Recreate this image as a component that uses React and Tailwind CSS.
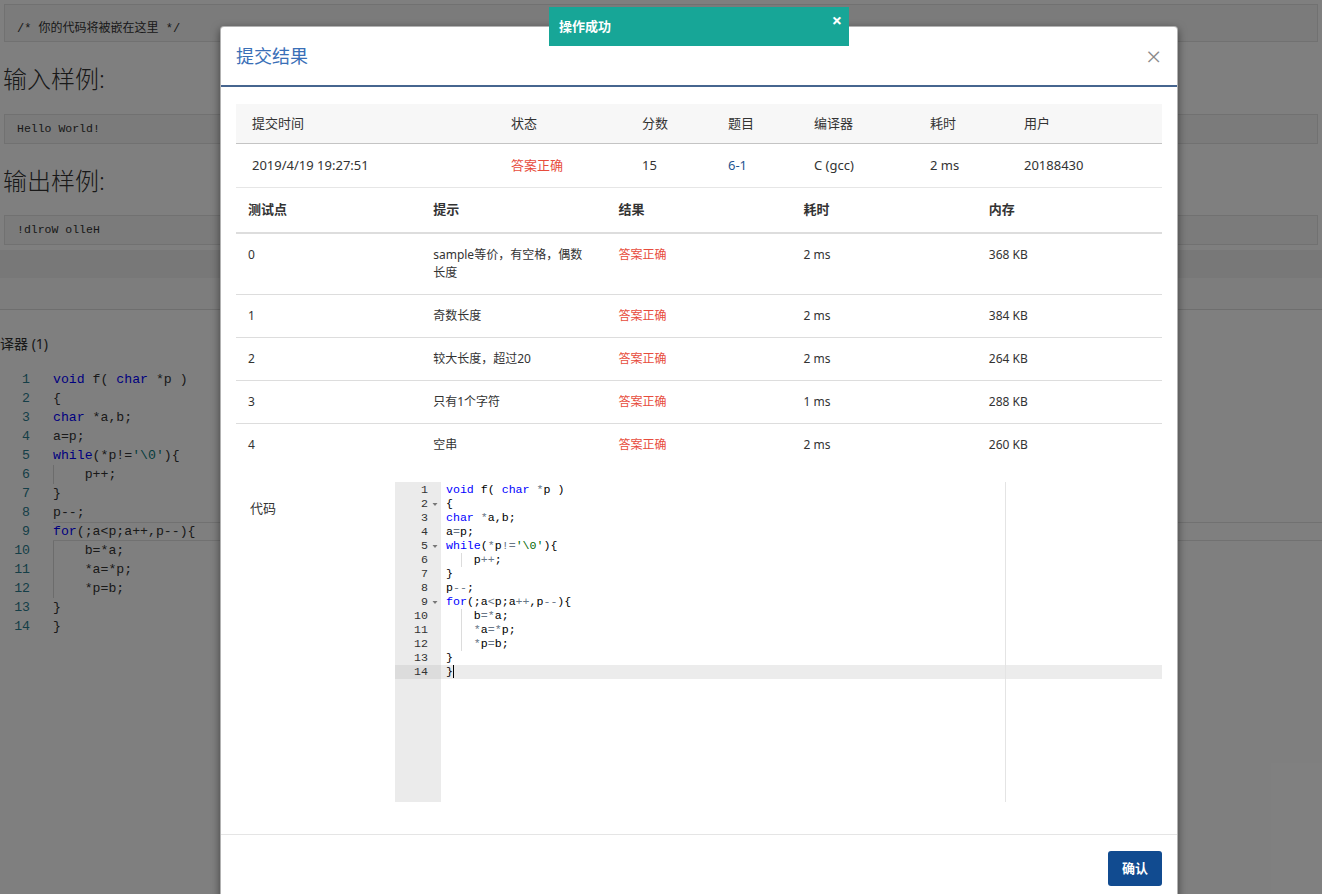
import React from "react";

const kw = "text-[#0000ff]";
const op = "text-[#687687]";
const str = "text-[#036a07]";

const code = [
  [["void", kw], [" f( ", ""], ["char", kw], [" ", ""], ["*", op], ["p )", ""]],
  [["{", ""]],
  [["char", kw], [" ", ""], ["*", op], ["a,b;", ""]],
  [["a", ""], ["=", op], ["p;", ""]],
  [["while", kw], ["(", ""], ["*", op], ["p", ""], ["!=", op], ["'\\0'", str], ["){", ""]],
  [["IND", ""], ["p", ""], ["++", op], [";", ""]],
  [["}", ""]],
  [["p", ""], ["--", op], [";", ""]],
  [["for", kw], ["(;a", ""], ["<", op], ["p;a", ""], ["++", op], [",p", ""], ["--", op], ["){", ""]],
  [["IND", ""], ["b", ""], ["=*", op], ["a;", ""]],
  [["IND", ""], ["*", op], ["a", ""], ["=*", op], ["p;", ""]],
  [["IND", ""], ["*", op], ["p", ""], ["=", op], ["b;", ""]],
  [["}", ""]],
  [["}", ""]],
];

const bgKw = "text-[#0000ff]";
const bgStr = "text-[#0a7a7a]";

function BgLine({ tokens }) {
  return tokens.map(([t, c], i) =>
    t === "IND" ? (
      <span key={i} className="inline-block h-[19px] w-[4ch] border-l border-[#d8d8d8] align-top" />
    ) : (
      <span key={i} className={c === kw ? bgKw : c === str ? bgStr : ""}>
        {t}
      </span>
    )
  );
}

function AceLine({ tokens }) {
  return tokens.map(([t, c], i) =>
    t === "IND" ? (
      <span key={i} className="ml-[2.2ch] inline-block h-[14px] w-[1.8ch] border-l border-[#dcdcdc] align-top" />
    ) : (
      <span key={i} className={c}>
        {t}
      </span>
    )
  );
}

const tests = [
  ["0", "sample等价，有空格，偶数长度", "2 ms", "368 KB"],
  ["1", "奇数长度", "2 ms", "384 KB"],
  ["2", "较大长度，超过20", "2 ms", "264 KB"],
  ["3", "只有1个字符", "1 ms", "288 KB"],
  ["4", "空串", "2 ms", "260 KB"],
];

const foldLines = [2, 5, 9];

export default function App() {
  return (
    <div className="relative h-[894px] w-[1322px] overflow-hidden bg-white font-['Noto_Sans','Noto_Sans_CJK_SC',sans-serif] text-[#333]">
      {/* background page */}
      <div className="pt-[4px]">
        <div className="mx-[4px] h-[38px] border border-[#e3e3e3] bg-[#f6f6f6] pl-[12px] pt-[15px] font-['Liberation_Mono','Noto_Sans_CJK_SC',monospace] text-[12px] leading-[18px]">
          /* 你的代码将被嵌在这里 */
        </div>
        <div className="mt-[19px] h-[36px] pl-[3px] text-[24px] font-light leading-[36px]">输入样例:</div>
        <div className="mx-[4px] mt-[17px] flex h-[30px] items-center border border-[#e3e3e3] bg-[#f6f6f6] pl-[12px] font-['Liberation_Mono',monospace] text-[11.5px]">
          Hello World!
        </div>
        <div className="mt-[19px] h-[36px] pl-[3px] text-[24px] font-light leading-[36px]">输出样例:</div>
        <div className="mx-[4px] mt-[16px] flex h-[30px] items-center border border-[#e3e3e3] bg-[#f6f6f6] pl-[12px] font-['Liberation_Mono',monospace] text-[11.5px]">
          !dlroW olleH
        </div>
        <div className="mt-[5px] h-[28px] bg-[#f1f1f1]" />
        <div className="h-[32px] border-b border-[#dcdcdc] bg-[#fafafa]" />
        <div className="mt-[24px] h-[20px] text-[14px] leading-[20px]">译器 (1)</div>
        <div className="mt-[16px] font-['Liberation_Mono',monospace] text-[13.2px]">
          {code.map((line, i) => (
            <div key={i} className="flex h-[19px] leading-[19px]">
              <div className="w-[30px] shrink-0 text-right text-[#2b7d8e]">{i + 1}</div>
              <div
                className={
                  "ml-[23px] flex-1 whitespace-pre " +
                  (i === 8 ? "border-y border-[#e2e2e2] leading-[17px]" : "")
                }
              >
                <BgLine tokens={line} />
              </div>
            </div>
          ))}
        </div>
      </div>

      {/* overlay */}
      <div className="absolute inset-0 bg-black/50" />

      {/* modal */}
      <div className="absolute left-[220px] top-[26px] flex h-[880px] w-[958px] flex-col rounded-t-[4px] border border-black/30 bg-white shadow-[0_3px_9px_rgba(0,0,0,0.5)]">
        <div className="flex h-[60px] shrink-0 items-center justify-between border-b-2 border-[#46658f] pl-[15px] pr-[16px]">
          <div className="text-[18px] text-[#3a6fb7]">提交结果</div>
          <div className="text-[26px] font-light leading-none text-[#8a8a8a]">×</div>
        </div>

        <div className="px-[15px] pt-[17px]">
          {/* table 1 */}
          <div className="grid h-[40px] grid-cols-[259px_131px_86px_86px_116px_94px_154px] items-center border-b border-[#c4c4c4] bg-[#f7f7f7] text-[13px] text-[#333]">
            {["提交时间", "状态", "分数", "题目", "编译器", "耗时", "用户"].map((h) => (
              <div key={h} className="pl-[16px]">
                {h}
              </div>
            ))}
          </div>
          <div className="grid h-[44px] grid-cols-[259px_131px_86px_86px_116px_94px_154px] items-center border-b border-[#e6e6e6] text-[13px] text-[#333]">
            <div className="pl-[16px]">2019/4/19 19:27:51</div>
            <div className="pl-[16px] text-[#e74c3c]">答案正确</div>
            <div className="pl-[16px]">15</div>
            <div className="pl-[16px] text-[#1f5592]">6-1</div>
            <div className="pl-[16px]">C (gcc)</div>
            <div className="pl-[16px]">2 ms</div>
            <div className="pl-[16px]">20188430</div>
          </div>

          {/* table 2 */}
          <div className="grid h-[46px] grid-cols-5 items-center border-b-2 border-[#dddddd] text-[13px] font-semibold text-[#333]">
            {["测试点", "提示", "结果", "耗时", "内存"].map((h) => (
              <div key={h} className="px-[12px]">
                {h}
              </div>
            ))}
          </div>
          {tests.map((t, i) => (
            <div
              key={i}
              className={
                "grid grid-cols-5 py-[12px] text-[12px] leading-[18px] text-[#333] " +
                (i < tests.length - 1 ? "border-b border-[#dddddd]" : "")
              }
            >
              <div className="px-[12px]">{t[0]}</div>
              <div className="pl-[12px] pr-[22px]">{t[1]}</div>
              <div className="px-[12px] text-[#e74c3c]">答案正确</div>
              <div className="px-[12px]">{t[2]}</div>
              <div className="px-[12px]">{t[3]}</div>
            </div>
          ))}

          {/* code */}
          <div className="mt-[16px] flex">
            <div className="w-[159px] shrink-0 pl-[14px] pt-[17px] text-[13px] leading-[18px]">代码</div>
            <div className="relative flex h-[320px] flex-1 overflow-hidden font-['Liberation_Mono',monospace] text-[11.6px] leading-[14px] text-black">
              <div className="w-[46px] shrink-0 bg-[#ebebeb] pt-[1px] text-[#333]">
                {code.map((_, i) => (
                  <div key={i} className={"flex h-[14px] " + (i === 13 ? "bg-[#dcdcdc]" : "")}>
                    <div className="flex-1 text-right">{i + 1}</div>
                    <div className="flex w-[13px] items-center justify-center">
                      {foldLines.includes(i + 1) && (
                        <svg width="6" height="5" viewBox="0 0 6 5">
                          <path d="M0.5 1 L5.5 1 L3 4 Z" fill="#777" />
                        </svg>
                      )}
                    </div>
                  </div>
                ))}
              </div>
              <div className="flex-1 pt-[1px]">
                {code.map((line, i) => (
                  <div key={i} className={"h-[14px] whitespace-pre pl-[5px] " + (i === 13 ? "bg-[#ececec]" : "")}>
                    <AceLine tokens={line} />
                    {i === 13 && <span className="inline-block h-[13px] border-l border-black align-top" />}
                  </div>
                ))}
              </div>
              <div className="absolute bottom-0 left-[610px] top-0 w-[1px] bg-[#e4e4e4]" />
            </div>
          </div>
        </div>

        <div className="mt-[32px] flex justify-end border-t border-[#e5e5e5] px-[15px] pt-[16px]">
          <button className="h-[35px] w-[54px] rounded-[3px] bg-[#114b90] text-[13px] font-semibold text-white">
            确认
          </button>
        </div>
      </div>

      {/* toast */}
      <div className="absolute left-[549px] top-[7px] h-[39px] w-[300px] bg-[#17a697] text-white">
        <div className="pl-[10px] pt-[9px] text-[13px] font-semibold leading-[20px]">操作成功</div>
        <div className="absolute right-[7px] top-[3px] text-[18px] font-bold leading-[20px]">×</div>
      </div>
    </div>
  );
}
